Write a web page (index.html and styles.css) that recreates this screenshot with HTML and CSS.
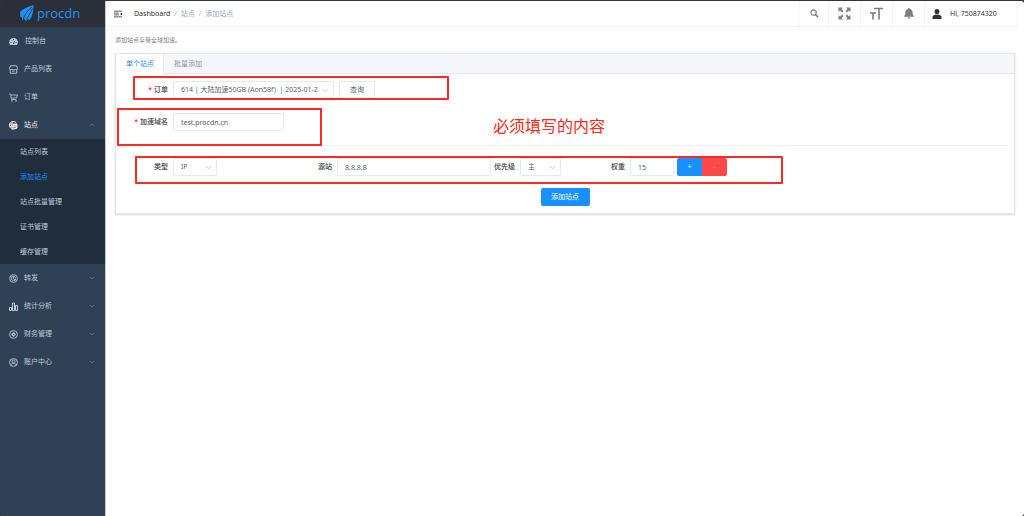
FILE: index.html
```html
<!DOCTYPE html>
<html lang="zh-CN">
<head>
<meta charset="utf-8">
<meta name="viewport" content="width=device-width, initial-scale=1">
<title>procdn</title>
<link rel="stylesheet" href="styles.css">
</head>
<body>
<svg class="defs" aria-hidden="true">
  <symbol id="chevron" viewBox="0 0 8 8"><path d="M1 2.5 4 5.5 7 2.5" fill="none" stroke="currentColor"/></symbol>
</svg>
<div class="app">
  <aside class="sidebar">
    <a class="logo" href="#">
      <svg class="logo-mark" viewBox="0 0 28 34"><path fill="#1e90f0" d="M27 0C18 3 6 7 0 14l1 10 3 1v6l4-4 4 5 4-4 3 2 4-6C26 17 27 8 27 0Z"/><path d="M24 4C16 10 9 19 6 30M25 7C21 16 17 23 12 29" fill="none" stroke="#2b2f3a" stroke-width="1.6"/></svg>
      <span>procdn</span>
    </a>
    <nav>
      <a class="item home" href="#"><svg class="icon" viewBox="0 0 18 18"><path fill="currentColor" d="M2 16C-2 9 2 2 9 2s11 7 7 14Z"/><path d="m9 14 2-6M3 11h2M5 6l1 1M9 4v2M13 11h2" stroke="#304156" stroke-width="1.8"/></svg><span>控制台</span></a>
      <a class="item" href="#"><svg class="icon" viewBox="0 0 18 18"><path d="M2.500 8v8.500h13V8M3 1.500h12l2 5.500c0 3-4 3-5 1-1 2-5 2-6 0-1 2-5 2-5-1ZM6 12h6" fill="none" stroke="currentColor" stroke-width="1.8"/></svg><span>产品列表</span></a>
      <a class="item" href="#"><svg class="icon" viewBox="0 0 18 18"><path d="M0 2h3l2 11h10M4 4h13l-2 6H5" fill="none" stroke="currentColor" stroke-width="1.6"/><circle cx="6" cy="16" r="1.5" fill="currentColor"/><circle cx="14" cy="16" r="1.5" fill="currentColor"/></svg><span>订单</span></a>
      <a class="item open" href="#"><svg class="icon" viewBox="0 0 18 18"><path d="M8 1c-4 0-7 3-7 7s3 8 8 9M1 6h9M1 11h7M8 1C4 5 4 12 8 16M8 1c3 0 6 1 7 4" fill="none" stroke="currentColor" stroke-width="2"/><path d="m12 5 5 2v5c0 3-3 4-5 5-2-1-5-2-5-5V7Z" fill="currentColor"/><path d="M9 10h6M9 13h5" stroke="#304156"/></svg><span>站点</span><svg class="arrow up"><use href="#chevron"/></svg></a>
      <div class="submenu">
        <a href="#">站点列表</a>
        <a class="current" href="#">添加站点</a>
        <a href="#">站点批量管理</a>
        <a href="#">证书管理</a>
        <a href="#">缓存管理</a>
      </div>
      <a class="item" href="#"><svg class="icon" viewBox="0 0 18 18"><g fill="none" stroke="currentColor" stroke-width="1.6"><circle cx="9" cy="9" r="7.8"/><circle cx="9" cy="9" r="4.400"/><path d="M9 5v5l3 2M3 5l3 2M15 13l-3-2"/></g></svg><span>转发</span><svg class="arrow"><use href="#chevron"/></svg></a>
      <a class="item" href="#"><svg class="icon" viewBox="0 0 18 18"><path d="M1 11h4v6H1ZM7 2h4v15H7ZM13 7h4v10h-4Z" fill="none" stroke="currentColor" stroke-width="2"/></svg><span>统计分析</span><svg class="arrow"><use href="#chevron"/></svg></a>
      <a class="item" href="#"><svg class="icon" viewBox="0 0 18 18"><circle cx="9" cy="9" r="7.8" fill="none" stroke="currentColor" stroke-width="1.8"/><path d="m9 4 5 5-5 5-5-5Z" fill="currentColor"/><circle cx="9" cy="9" r="1.4" fill="#304156"/></svg><span>财务管理</span><svg class="arrow"><use href="#chevron"/></svg></a>
      <a class="item" href="#"><svg class="icon" viewBox="0 0 18 18"><g fill="none" stroke="currentColor" stroke-width="1.8"><circle cx="9" cy="9" r="7.8"/><circle cx="9" cy="7" r="3"/><path d="M4 15c0-6 10-6 10 0"/></g></svg><span>账户中心</span><svg class="arrow"><use href="#chevron"/></svg></a>
    </nav>
  </aside>

  <div class="content">
    <header class="topbar">
      <button class="fold" type="button" aria-label="Menu"><svg viewBox="0 0 18 16"><path d="M0 1.500h18M0 6h11M0 10h11M0 14.500h18" stroke="#303133" stroke-width="1.8"/><path d="m18 5-5 3 5 3Z" fill="#303133"/></svg></button>
      <nav class="crumbs"><a class="root" href="#">Dashboard</a><i>/</i><span>站点</span><i>/</i><span>添加站点</span></nav>
      <div class="tools">
        <button class="tool search" type="button" aria-label="Search"><svg viewBox="0 0 20 20"><circle cx="8" cy="8" r="6" fill="none" stroke="currentColor" stroke-width="2.4"/><path d="m12 12 6 6" stroke="currentColor" stroke-width="3.4"/></svg></button>
        <button class="tool full" type="button" aria-label="Fullscreen"><svg viewBox="0 0 26 26"><path fill="currentColor" d="M1 1h9L7 4l4 4-3 3-4-4-3 3ZM25 1v9l-3-3-4 4-3-3 4-4-3-3ZM1 25v-9l3 3 4-4 3 3-4 4 3 3ZM25 25h-9l3-3-4-4 3-3 4 4 3-3Z"/></svg></button>
        <button class="tool size" type="button" aria-label="Text size"><svg viewBox="0 0 26 26"><path d="M8 3h18M18 2v23M0 12h12M6 12v13" stroke="currentColor" stroke-width="3.2"/></svg></button>
        <button class="tool bell" type="button" aria-label="Notifications"><svg viewBox="0 0 22 24"><path fill="currentColor" d="M11 0c1 0 2 1 2 2 4 1 6 4 6 8 0 5 1 6 3 8v1H0v-1c2-2 3-3 3-8 0-4 2-7 6-8 0-1 1-2 2-2ZM8 20h6c0 4-6 4-6 0Z"/></svg></button>
        <a class="user" href="#"><svg viewBox="0 0 20 20"><path fill="#303133" d="M10 0c7 0 6 10 0 11C4 10 3 0 10 0ZM1 20v-4c0-3 3-4 6-5 2 1 4 1 6 0 3 1 6 2 6 5v4Z"/></svg><span>Hi, 750874320</span></a>
      </div>
    </header>

    <main>
      <p class="intro">添加站点享受全球加速。</p>
      <section class="card">
        <div class="tabs"><button class="tab active" type="button">单个站点</button><button class="tab" type="button">批量添加</button></div>
        <form class="form">
          <div class="row">
            <label class="required" for="order">订单</label>
            <span class="select order"><select id="order"><option>614 | 大陆加速50GB (Aon58f)&nbsp; | 2025-01-21</option></select><svg><use href="#chevron"/></svg></span>
            <button class="query" type="button">查询</button>
          </div>
          <div class="row domain">
            <label class="required" for="domain">加速域名</label>
            <input id="domain" class="name" type="text" value="test.procdn.cn">
          </div>
          <hr>
          <div class="origin">
            <div class="row"><label for="type">类型</label><span class="select type"><select id="type"><option>IP</option></select><svg><use href="#chevron"/></svg></span></div>
            <div class="row"><label for="source">源站</label><input id="source" class="grow" type="text" value="8.8.8.8"></div>
            <div class="row"><label class="short" for="priority">优先级</label><span class="select priority"><select id="priority"><option>主</option></select><svg><use href="#chevron"/></svg></span></div>
            <div class="row"><label for="weight">权重</label><input id="weight" class="weight" type="text" value="15"><div class="pair"><button class="add" type="button">+</button><button class="remove" type="button">-</button></div></div>
          </div>
          <div class="actions"><button class="submit" type="submit">添加站点</button></div>
        </form>
        <div class="mark mark-order"></div>
        <div class="mark mark-domain"></div>
        <div class="mark mark-origin"></div>
        <strong class="note">必须填写的内容</strong>
      </section>
    </main>
  </div>
</div>
</body>
</html>
```
FILE: styles.css
```css
* { box-sizing: border-box; }
body {
  margin: 0;
  background: #35373b;
  font: 7px/12px "Noto Sans", "Noto Sans CJK SC", sans-serif;
  color: #606266;
}
a { color: inherit; text-decoration: none; }
button, input, select { font: inherit; color: #606266; margin: 0; }
button { padding: 0; border: 0; background: none; cursor: pointer; }
svg { display: block; flex: none; }
.defs { position: absolute; width: 0; height: 0; }

.app {
  display: flex;
  min-height: 100vh;
  border-radius: 3px;
  overflow: hidden;
}

/* Sidebar */
.sidebar {
  flex: none;
  width: 105px;
  background: #304156;
  color: #bfcbd9;
}
.logo {
  display: flex;
  align-items: center;
  gap: 3px;
  height: 27px;
  padding-left: 20px;
  background: #2b2f3a;
  color: #2294f2;
  font-family: "Open Sans", sans-serif;
  font-size: 13px;
  font-weight: 500;
  line-height: 24px;
}
.logo span { padding-bottom: 2px; }
.logo-mark { width: 14px; height: 17px; }
.item {
  display: flex;
  align-items: center;
  height: 28px;
  padding: 0 10px 0 9px;
  gap: 6px;
}
.open { color: #f4f4f5; }
.icon { width: 9px; height: 9px; }
.home .icon { margin-right: 1px; }
.arrow { width: 6px; height: 6px; margin-left: auto; color: #738397; }
.up { transform: rotate(180deg); }
.submenu { background: #1f2d3d; }
.submenu a {
  display: block;
  padding-left: 20px;
  line-height: 25px;
}
.submenu .current { color: #1890ff; }

/* Top bar */
.content {
  flex: 1;
  min-width: 0;
  margin-top: 1px;
  background: #fff;
  border-left: 1px solid #c5cbd3;
  border-top-right-radius: 3px;
}
.topbar {
  display: flex;
  align-items: center;
  height: 26px;
  margin-right: 7px;
  padding-left: 8px;
  border-bottom: 1px solid #f2f3f5;
}
.fold svg { width: 8px; height: 8px; }
.crumbs {
  display: flex;
  gap: 4px;
  margin-left: 12px;
  color: #97a8be;
}
.crumbs .root { color: #303133; }
.crumbs i { color: #a8afb9; }
.tools {
  display: flex;
  align-self: stretch;
  margin-left: auto;
  border-right: 1px solid #f3f4f5;
}
.tool, .user {
  display: flex;
  align-items: center;
  justify-content: center;
  width: 32px;
  border-left: 1px solid #f3f4f5;
  color: #7d7e81;
}
.search { width: 29px; }
.search svg { width: 9px; height: 9px; }
.full svg, .size svg { width: 13px; height: 13px; }
.bell svg { width: 10px; height: 11px; }
.user {
  justify-content: flex-start;
  width: 92px;
  gap: 8px;
  padding-left: 7px;
  color: #303133;
}
.user svg { width: 10px; height: 10px; }

/* Page */
main { padding: 7px 9px; }
.intro {
  margin: 0 0 7px;
  font-size: 6px;
  color: #7b7f86;
}
.card {
  position: relative;
  border: 1px solid #e2e5ea;
  box-shadow: 0 1px 2px rgba(0, 0, 0, 0.16);
}
.tabs {
  display: flex;
  height: 20px;
  background: #f5f7fa;
  border-bottom: 1px solid #e4e7ed;
}
.tab {
  height: 20px;
  padding: 0 10px;
  color: #909399;
}
.active {
  padding-right: 9px;
  background: #fff;
  border-right: 1px solid #e4e7ed;
  color: #1890ff;
}
.form { padding: 7px 8px; }
.row {
  display: flex;
  align-items: center;
  gap: 5px;
  min-width: 0;
}
.domain { margin-top: 14px; }
label {
  flex: none;
  width: 44px;
  text-align: right;
  font-weight: 700;
  white-space: nowrap;
}
.short { width: 24px; }
.required::before {
  content: "*";
  margin-right: 2px;
  color: #ff4949;
}
input, select, .query {
  height: 18px;
  border: 1px solid #e6e9ef;
  border-radius: 2px;
  background: #fff;
}
input { min-width: 0; padding: 0 7px; }
.select { display: grid; align-items: center; }
.select select, .select svg { grid-area: 1 / 1; }
.select select {
  appearance: none;
  width: 100%;
  padding: 0 14px 0 7px;
}
.select svg {
  justify-self: end;
  width: 7px;
  height: 7px;
  margin-right: 5px;
  color: #c0c4cc;
  pointer-events: none;
}
.order { width: 161px; }
.query { width: 36px; }
.name { width: 111px; }
.type { width: 44px; }
.priority { width: 41px; }
.grow { flex: 1; }
.weight { width: 44px; }
hr {
  margin: 14px 0 12px;
  border: 0;
  border-top: 1px solid #eceef2;
}
.origin {
  display: grid;
  grid-template-columns: 164fr 203fr 90fr 425fr;
}
.pair {
  display: flex;
  border-radius: 2px;
  overflow: hidden;
}
.weight + .pair { margin-left: -2px; }
.pair button { width: 25px; height: 18px; color: #fff; }
.add { background: #1890ff; }
.remove { background: #ff4949; }
.actions {
  display: flex;
  justify-content: center;
  margin-top: 12px;
}
.submit {
  width: 49px;
  height: 18px;
  border-radius: 2px;
  background: #1890ff;
  color: #fff;
}

/* Annotations drawn over the form */
.mark {
  position: absolute;
  border: 2px solid #fa2a20;
  border-radius: 1px;
  pointer-events: none;
}
.mark-order { left: 17px; top: 22px; width: 316px; height: 24px; }
.mark-domain { left: 1px; top: 54px; width: 205px; height: 38px; }
.mark-origin { left: 19px; top: 102px; width: 648px; height: 28px; }
.note {
  position: absolute;
  left: 377px;
  top: 60px;
  font-size: 16px;
  font-weight: 400;
  line-height: 24px;
  color: #fa2a20;
  pointer-events: none;
}
```
